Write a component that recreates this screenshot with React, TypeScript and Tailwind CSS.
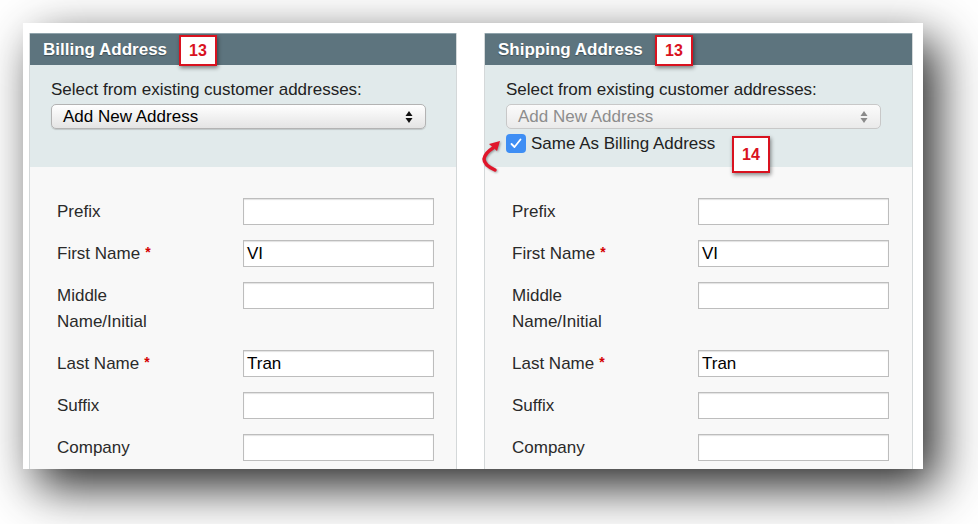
import React from "react";

const Arrows = ({ color }: { color: string }) => (
  <svg width="8" height="14" viewBox="0 0 8 14" className="shrink-0">
    <path d="M4 1 L7.5 6 L0.5 6 Z" fill={color} />
    <path d="M4 13 L7.5 8 L0.5 8 Z" fill={color} />
  </svg>
);

const Badge = ({ n, className }: { n: string; className: string }) => (
  <div
    className={
      "absolute w-[38px] h-[31px] bg-white border-2 border-[#d9121f] shadow-[1px_2px_4px_rgba(0,0,0,0.45)] flex items-center justify-center text-[16px] font-bold text-[#d9121f] " +
      className
    }
  >
    {n}
  </div>
);

const Row = ({
  label,
  value,
  required,
}: {
  label: React.ReactNode;
  value?: string;
  required?: boolean;
}) => (
  <div className="flex items-start">
    <div className="w-[186px] text-[17px] leading-[26px] text-[#2a2a2a] pt-[1px]">
      {label}
      {required && <span className="text-[#d40000] font-bold text-[14px] ml-[5px] relative -top-[2px]">*</span>}
    </div>
    <div className="w-[191px] h-[27px] bg-white border border-[#bdbdbd] shadow-[inset_0_1px_1px_rgba(0,0,0,0.12)] flex items-center pl-[3px] text-[17px] text-black">
      {value}
    </div>
  </div>
);

const Form = () => (
  <div className="flex-1 bg-[#f8f8f8] pt-[31px] pl-[27px] flex flex-col gap-[15px]">
    <Row label="Prefix" />
    <Row label="First Name" required value="VI" />
    <Row
      label={
        <>
          Middle
          <br />
          Name/Initial
        </>
      }
    />
    <Row label="Last Name" required value="Tran" />
    <Row label="Suffix" />
    <Row label="Company" />
  </div>
);

const Panel = ({
  title,
  width,
  shipping,
}: {
  title: string;
  width: string;
  shipping?: boolean;
}) => (
  <div className={"flex flex-col h-[460px] border-x border-[#d4d8d9] " + width}>
    <div className="h-[32px] bg-[#5d747e] border-t border-[#8fa3ab] flex items-center pl-[13px] text-white font-bold text-[17px] [text-shadow:0_1px_1px_rgba(0,0,0,0.35)]">
      {title}
    </div>
    <div className="h-[102px] bg-[#e1eaeb] pt-[15px] pl-[21px]">
      <div className="text-[17px] leading-[19px] text-[#222]">Select from existing customer addresses:</div>
      <div
        className={
          "mt-[5px] w-[375px] h-[25px] rounded-[5px] border flex items-center justify-between pl-[11px] pr-[12px] text-[17px] " +
          (shipping
            ? "border-[#c8c8c8] bg-gradient-to-b from-[#fbfbfb] to-[#eaeaea] text-[#8d8d8d]"
            : "border-[#b3b3b3] bg-gradient-to-b from-[#ffffff] to-[#e4e4e4] text-black shadow-[0_1px_1px_rgba(0,0,0,0.15)]")
        }
      >
        <span>Add New Address</span>
        <Arrows color={shipping ? "#8a8a8a" : "#111"} />
      </div>
      {shipping && (
        <div className="mt-[5px] flex items-center gap-[5px]">
          <div className="w-[20px] h-[19px] rounded-[4px] bg-[#3e8ef4] flex items-center justify-center">
            <svg width="12" height="11" viewBox="0 0 12 11">
              <path d="M1.5 6 L4.5 9 L10.5 1.5" fill="none" stroke="white" strokeWidth="1.8" strokeLinecap="round" strokeLinejoin="round" />
            </svg>
          </div>
          <span className="text-[17px] leading-[18px] text-[#222]">Same As Billing Address</span>
        </div>
      )}
    </div>
    <Form />
  </div>
);

export default function App() {
  return (
    <div className="w-[978px] h-[524px] bg-white overflow-hidden relative font-['Liberation_Sans',Arial,sans-serif]">
      <div className="pt-[23px] pl-[23px]">
        <div className="w-[900px] h-[446px] bg-white overflow-hidden shadow-[14px_18px_46px_rgba(0,0,0,0.85)]">
          <div className="flex pt-[10px] pl-[6px] gap-[27px]">
            <Panel title="Billing Address" width="w-[428px]" />
            <Panel title="Shipping Address" width="w-[429px]" shipping />
          </div>
        </div>
      </div>
      <Badge n="13" className="left-[179px] top-[35px]" />
      <Badge n="13" className="left-[655px] top-[35px]" />
      <Badge n="14" className="left-[732px] top-[136px] h-[37px]" />
      <svg className="absolute left-[476px] top-[136px]" width="30" height="40" viewBox="0 0 30 40">
        <g style={{ filter: "drop-shadow(1px 1px 1px rgba(0,0,0,0.35))" }}>
          <path d="M19 34 Q8 29 8 23 Q9 17 17 12" fill="none" stroke="#e0162b" strokeWidth="3.5" strokeLinecap="round" />
          <path d="M13 8 L24 5 L21 15 Z" fill="#e0162b" />
        </g>
      </svg>
    </div>
  );
}
